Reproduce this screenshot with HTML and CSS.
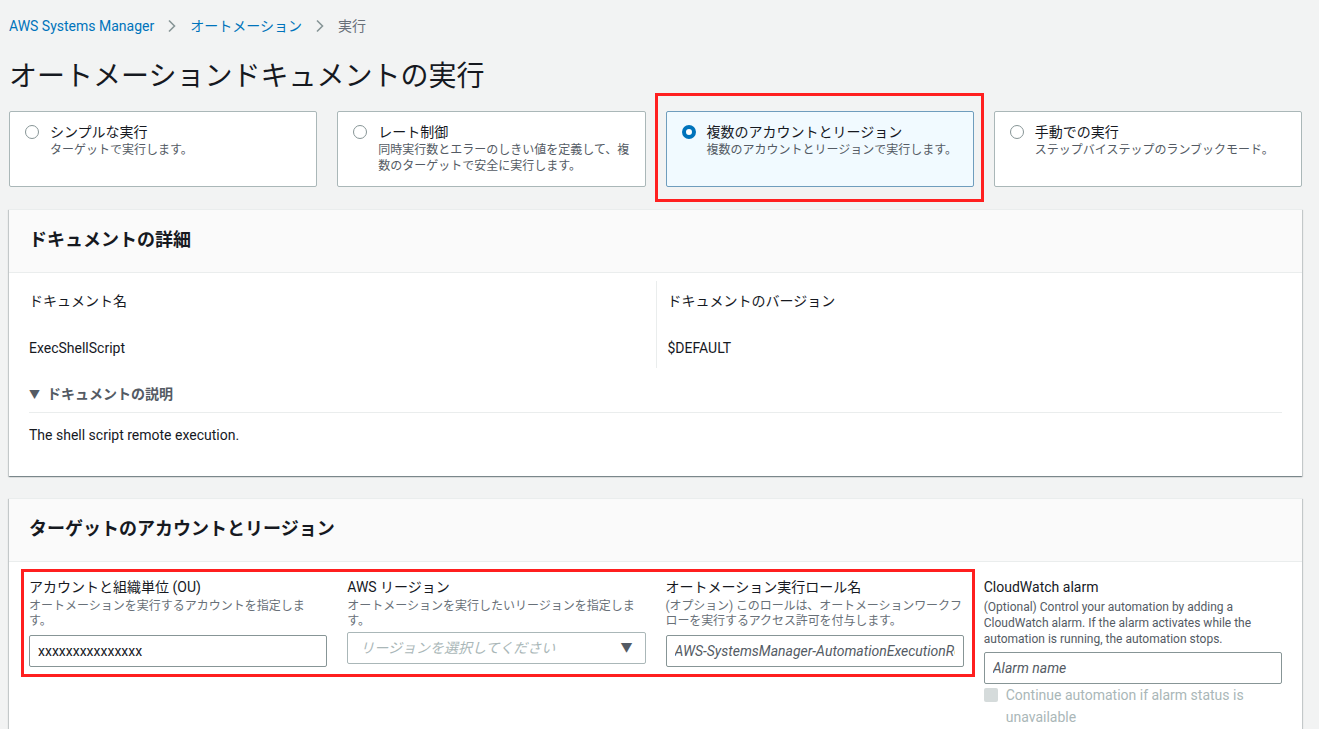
FILE: index.html
```html
<!DOCTYPE html>
<html lang="ja">
<head>
    <meta charset="UTF-8">
    <meta name="viewport" content="width=device-width, initial-scale=1.0">
    <title>オートメーションドキュメントの実行</title>
    <link rel="stylesheet" href="styles.css">
</head>
<body>

    <!-- パンくずリスト -->
    <nav class="breadcrumb">
        <a href="#">AWS Systems Manager</a>
        <svg class="chev" width="10" height="14" viewBox="0 0 10 14"><path d="M2 1.5 L7.5 7 L2 12.5" fill="none" stroke="#879596" stroke-width="1.6"/></svg>
        <a href="#">オートメーション</a>
        <svg class="chev" width="10" height="14" viewBox="0 0 10 14"><path d="M2 1.5 L7.5 7 L2 12.5" fill="none" stroke="#879596" stroke-width="1.6"/></svg>
        <span class="current">実行</span>
    </nav>

    <h1 class="page-title">オートメーションドキュメントの実行</h1>

    <!-- 実行モード -->
    <div class="modes">
        <label class="mode">
            <span class="radio"></span>
            <span class="mode-text">
                <span class="mode-title">シンプルな実行</span>
                <span class="mode-desc">ターゲットで実行します。</span>
            </span>
        </label>
        <label class="mode">
            <span class="radio"></span>
            <span class="mode-text">
                <span class="mode-title">レート制御</span>
                <span class="mode-desc">同時実行数とエラーのしきい値を定義して、複数のターゲットで安全に実行します。</span>
            </span>
        </label>
        <label class="mode selected">
            <span class="radio"></span>
            <span class="mode-text">
                <span class="mode-title">複数のアカウントとリージョン</span>
                <span class="mode-desc">複数のアカウントとリージョンで実行します。</span>
            </span>
            <span class="highlight mode-highlight"></span>
        </label>
        <label class="mode">
            <span class="radio"></span>
            <span class="mode-text">
                <span class="mode-title">手動での実行</span>
                <span class="mode-desc">ステップバイステップのランブックモード。</span>
            </span>
        </label>
    </div>

    <!-- ドキュメントの詳細 -->
    <section class="panel">
        <div class="panel-header">
            <h2>ドキュメントの詳細</h2>
        </div>
        <div class="panel-body">
            <div class="kv">
                <div class="kv-col">
                    <div class="kv-label">ドキュメント名</div>
                    <div class="kv-value">ExecShellScript</div>
                </div>
                <div class="kv-col">
                    <div class="kv-label">ドキュメントのバージョン</div>
                    <div class="kv-value">$DEFAULT</div>
                </div>
            </div>
            <div class="expand">
                <div class="expand-head"><span class="caret">▼</span>ドキュメントの説明</div>
                <div class="expand-body">The shell script remote execution.</div>
            </div>
        </div>
    </section>

    <!-- ターゲットのアカウントとリージョン -->
    <section class="panel">
        <div class="panel-header">
            <h2>ターゲットのアカウントとリージョン</h2>
        </div>
        <div class="panel-body target-body">
            <div class="fields">
                <div class="field">
                    <div class="field-label">アカウントと組織単位 (OU)</div>
                    <div class="field-desc">オートメーションを実行するアカウントを指定します。</div>
                    <input class="input" type="text" value="xxxxxxxxxxxxxxx">
                </div>
                <div class="field">
                    <div class="field-label">AWS リージョン</div>
                    <div class="field-desc">オートメーションを実行したいリージョンを指定します。</div>
                    <div class="select">
                        <span class="select-placeholder">リージョンを選択してください</span>
                        <span class="select-caret">▼</span>
                    </div>
                </div>
                <div class="field">
                    <div class="field-label">オートメーション実行ロール名</div>
                    <div class="field-desc tight">(オプション) このロールは、オートメーションワークフローを実行するアクセス許可を付与します。</div>
                    <input class="input italic" type="text" placeholder="AWS-SystemsManager-AutomationExecutionRole">
                </div>
                <div class="field alarm">
                    <div class="field-label">CloudWatch alarm</div>
                    <div class="field-desc">(Optional) Control your automation by adding a CloudWatch alarm. If the alarm activates while the automation is running, the automation stops.</div>
                    <input class="input italic" type="text" placeholder="Alarm name">
                    <div class="check-row">
                        <span class="checkbox"></span>
                        <span>Continue automation if alarm status is unavailable</span>
                    </div>
                </div>
                <span class="highlight fields-highlight"></span>
            </div>
        </div>
    </section>

</body>
</html>
```

FILE: styles.css
```css
body {
    margin: 0;
    padding: 16px 17px 0 9px;
    background: #f2f3f3;
    color: #16191f;
    font-family: Roboto, "Noto Sans CJK JP", sans-serif;
    font-size: 14px;
    line-height: 20px;
}

/* パンくず */
.breadcrumb {
    display: flex;
    align-items: center;
    height: 20px;
}
.breadcrumb a {
    color: #0073bb;
    text-decoration: none;
}
.breadcrumb .chev {
    margin: 0 13px;
}
.breadcrumb .current {
    color: #687078;
}

.page-title {
    margin: 23px 0 16px;
    font-size: 28px;
    line-height: 36px;
    font-weight: 400;
}

/* 実行モードのカード */
.modes {
    display: grid;
    grid-template-columns: repeat(4, 1fr);
    gap: 20px;
}
.mode {
    position: relative;
    display: flex;
    gap: 11px;
    height: 76px;
    box-sizing: border-box;
    padding: 10px 10px 0 15px;
    background: #fff;
    border: 1px solid #aab7b8;
    border-radius: 2px;
}
.mode.selected {
    background: #f1faff;
    border-color: #6f9dbd;
}
.radio {
    flex: none;
    width: 14px;
    height: 14px;
    margin-top: 3px;
    box-sizing: border-box;
    border: 1px solid #879596;
    border-radius: 50%;
    background: #fff;
}
.mode.selected .radio {
    border: 4px solid #0073bb;
}
.mode-text {
    display: flex;
    flex-direction: column;
}
.mode-title {
    font-size: 14px;
    line-height: 20px;
}
.mode-desc {
    font-size: 12px;
    line-height: 16px;
    color: #545b64;
}

/* 赤枠の注釈 */
.highlight {
    position: absolute;
    border: 3px solid #ff1f1f;
    box-sizing: border-box;
    pointer-events: none;
}
.mode-highlight {
    left: -12px;
    top: -19px;
    width: 329px;
    height: 109px;
}
.fields-highlight {
    left: -8px;
    top: -8px;
    width: 954px;
    height: 108px;
}

/* パネル */
.panel {
    margin-top: 22px;
    background: #fff;
    box-shadow: 0 1px 1px 0 rgba(0, 28, 36, 0.3), 1px 1px 1px 0 rgba(0, 28, 36, 0.15), -1px 1px 1px 0 rgba(0, 28, 36, 0.15);
    border-top: 1px solid #eaeded;
}
.panel-header {
    padding: 18px 20px 20px;
    background: #fafafa;
    border-bottom: 1px solid #eaeded;
}
.panel-header h2 {
    margin: 0;
    font-size: 18px;
    line-height: 24px;
    font-weight: 700;
}
.panel-body {
    padding: 8px 20px 31px;
}

.kv {
    display: grid;
    grid-template-columns: 1fr 1fr;
}
.kv-col {
    padding: 10px 0;
}
.kv-col + .kv-col {
    border-left: 1px solid #eaeded;
    padding-left: 11px;
}
.kv-value {
    margin-top: 27px;
}

.expand {
    margin-top: 16px;
}
.expand-head {
    padding-bottom: 6px;
    border-bottom: 1px solid #eaeded;
    color: #545b64;
    font-weight: 700;
}
.expand-head .caret {
    display: inline-block;
    width: 18px;
    font-size: 11px;
}
.expand-body {
    padding-top: 12px;
}

/* ターゲット */
.target-body {
    padding-top: 15px;
    padding-bottom: 30px;
}
.fields {
    position: relative;
    display: grid;
    grid-template-columns: repeat(4, 1fr);
    gap: 20px;
    align-items: start;
}
.field-desc {
    font-size: 12px;
    line-height: 15px;
    color: #687078;
    margin-top: 2px;
}
.field-desc.tight {
    letter-spacing: -0.1px;
}
.alarm .field-desc {
    line-height: 16px;
    color: #545b64;
}
.input {
    display: block;
    width: 100%;
    height: 32px;
    box-sizing: border-box;
    margin-top: 6px;
    padding: 0 8px;
    border: 1px solid #879596;
    border-radius: 2px;
    font-family: Roboto, "Noto Sans CJK JP", sans-serif;
    font-size: 14px;
    color: #16191f;
    background: #fff;
}
.input.italic::placeholder {
    font-style: italic;
    color: #545b64;
}
.alarm .input {
    margin-top: 5px;
}
.select {
    display: flex;
    align-items: center;
    justify-content: space-between;
    height: 30px;
    margin-top: 3px;
    padding: 0 12px 0 12px;
    border: 1px solid #aab7b8;
    border-radius: 2px;
}
.select-placeholder {
    font-style: italic;
    color: #aab7b8;
}
.select-caret {
    color: #545b64;
    font-size: 12px;
}
.check-row {
    display: flex;
    gap: 8px;
    line-height: 22px;
    color: #aab7b8;
}
.checkbox {
    flex: none;
    width: 14px;
    height: 14px;
    margin-top: 4px;
    background: #d5dbdb;
    border-radius: 2px;
}
```
